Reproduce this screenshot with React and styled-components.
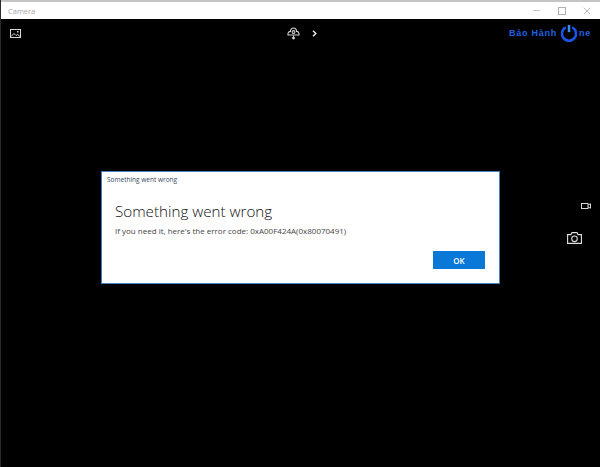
import React from "react";
import styled, { createGlobalStyle } from "styled-components";

const GlobalStyle = createGlobalStyle`
  html, body {
    margin: 0;
    padding: 0;
    background: #000;
  }
  body {
    font-family: "Open Sans", "Liberation Sans", sans-serif;
  }
`;

const Window = styled.div`
  width: 600px;
  height: 467px;
  display: flex;
  flex-direction: column;
  overflow: hidden;
  background: #000;
  border-left: 1px solid #2b2b2b;
  box-sizing: border-box;
`;

const TitleBar = styled.div`
  height: 19px;
  flex: none;
  box-sizing: border-box;
  border-top: 2px solid #c4c4c4;
  background: #fff;
  display: flex;
  align-items: center;
  justify-content: space-between;
  padding-left: 7px;
`;

const AppName = styled.span`
  font-size: 7.5px;
  color: #a6a6a6;
`;

const WindowControls = styled.div`
  display: flex;
  align-items: center;
  gap: 17px;
  padding-right: 9px;
`;

const TopBar = styled.div`
  height: 28px;
  flex: none;
  display: grid;
  grid-template-columns: 1fr auto 1fr;
  align-items: center;
  padding-left: 9px;
`;

const CenterTools = styled.div`
  display: flex;
  align-items: center;
  gap: 12px;
  margin-right: 6px;
`;

const Logo = styled.div`
  justify-self: end;
  display: flex;
  align-items: center;
  font-family: "Liberation Sans", sans-serif;
  font-weight: 700;
  font-size: 9px;
  letter-spacing: 0.75px;
  color: #1f62e4;
  padding-right: 9px;
`;

const Stage = styled.div`
  flex: 1;
  display: grid;
  grid-template-columns: 100px 399px 1fr;
  align-items: start;
`;

const Dialog = styled.div`
  grid-column: 2;
  margin-top: 124px;
  height: 113px;
  box-sizing: border-box;
  background: #fff;
  border: 1px solid #3f83c4;
  display: flex;
  flex-direction: column;
  padding: 3px 14px 14px 13px;
`;

const DialogCaption = styled.div`
  font-size: 6.5px;
  line-height: 10px;
  color: #33475a;
  margin-left: -8px;
`;

const DialogTitle = styled.h1`
  margin: 16px 0 0;
  font-family: "Open Sans", sans-serif;
  font-weight: 300;
  font-size: 15.2px;
  line-height: 20px;
  color: #111;
`;

const DialogText = styled.p`
  margin: 4px 0 0;
  font-size: 8px;
  line-height: 12px;
  color: #444;
`;

const DialogActions = styled.div`
  margin-top: auto;
  display: flex;
  justify-content: flex-end;
`;

const OkButton = styled.button`
  width: 52px;
  height: 18px;
  border: 0;
  padding: 0;
  background: #0a78d7;
  color: #fff;
  font-family: "Open Sans", sans-serif;
  font-size: 8px;
  font-weight: 600;
`;

const SideRail = styled.div`
  grid-column: 3;
  margin-top: 156px;
  display: flex;
  flex-direction: column;
  align-items: flex-end;
  gap: 23px;
  padding-right: 9px;
`;

const CameraSlot = styled.div`
  display: flex;
  margin-right: 9px;
`;

const PhotoIcon = () => (
  <svg width="11" height="9" viewBox="0 0 11 9" fill="none" stroke="#d8d8d8" strokeWidth="1">
    <rect x="0.5" y="0.5" width="10" height="8" />
    <path d="M1 7.5 L4 4.5 L6 6.5 L7.5 5.5 L10 7.5" />
    <rect x="7" y="2" width="1.5" height="1.5" fill="#d8d8d8" stroke="none" />
  </svg>
);

const PeopleIcon = () => (
  <svg width="13" height="13" viewBox="0 0 13 13" fill="none" stroke="#d4d4d4" strokeWidth="1.1">
    <path d="M1 8 C0.5 5.5 2 4.5 3.4 4.4 C3.6 2 5 1 6.5 1 C8 1 9.4 2 9.6 4.4 C11 4.5 12.5 5.5 12 8 Z" />
    <circle cx="6.5" cy="5" r="1.4" />
    <path d="M6.5 8.5 V12 M5 10.5 L6.5 12 L8 10.5" />
  </svg>
);

const ChevronIcon = () => (
  <svg width="5" height="7" viewBox="0 0 5 7" fill="none" stroke="#f0f0f0" strokeWidth="1.4">
    <path d="M1 0.8 L3.8 3.5 L1 6.2" />
  </svg>
);

const MinimizeIcon = () => (
  <svg width="9" height="9" viewBox="0 0 9 9" stroke="#c4c4c4" strokeWidth="1">
    <path d="M1 4.5 H8" />
  </svg>
);

const MaximizeIcon = () => (
  <svg width="8" height="8" viewBox="0 0 8 8" fill="none" stroke="#b0b0b0" strokeWidth="1">
    <rect x="0.5" y="0.5" width="7" height="7" />
  </svg>
);

const CloseIcon = () => (
  <svg width="8" height="8" viewBox="0 0 8 8" stroke="#bcbcbc" strokeWidth="1">
    <path d="M0.8 0.8 L7.2 7.2 M7.2 0.8 L0.8 7.2" />
  </svg>
);

const PowerMark = styled.svg`
  margin: 0 1px 0 3px;
`;

const PowerIcon = () => (
  <PowerMark width="18" height="18" viewBox="0 0 20 20" fill="none" stroke="#1a55e6" strokeWidth="2.8">
    <path d="M6.5 3.8 A7.8 7.8 0 1 0 13.5 3.8" />
    <path d="M10 1 V9" stroke="#3f8af0" />
  </PowerMark>
);

const VideoIcon = () => (
  <svg width="10" height="6" viewBox="0 0 10 6" fill="none" stroke="#d8d8d8" strokeWidth="1">
    <rect x="0.5" y="0.5" width="6.5" height="5" />
    <path d="M7 2 L9.5 0.8 V5.2 L7 4" />
  </svg>
);

const CameraIcon = () => (
  <svg width="15" height="12" viewBox="0 0 15 12" fill="none" stroke="#e0e0e0" strokeWidth="1.1">
    <path d="M0.6 2.6 H4 L5 0.6 H10 L11 2.6 H14.4 V11.4 H0.6 Z" />
    <circle cx="7.5" cy="6.8" r="2.8" />
  </svg>
);

const App = () => (
  <>
    <GlobalStyle />
    <Window>
      <TitleBar>
        <AppName>Camera</AppName>
        <WindowControls>
          <MinimizeIcon />
          <MaximizeIcon />
          <CloseIcon />
        </WindowControls>
      </TitleBar>
      <TopBar>
        <PhotoIcon />
        <CenterTools>
          <PeopleIcon />
          <ChevronIcon />
        </CenterTools>
        <Logo>
          Bảo Hành
          <PowerIcon />
          ne
        </Logo>
      </TopBar>
      <Stage>
        <Dialog>
          <DialogCaption>Something went wrong</DialogCaption>
          <DialogTitle>Something went wrong</DialogTitle>
          <DialogText>If you need it, here's the error code: 0xA00F424A(0x80070491)</DialogText>
          <DialogActions>
            <OkButton>OK</OkButton>
          </DialogActions>
        </Dialog>
        <SideRail>
          <VideoIcon />
          <CameraSlot>
            <CameraIcon />
          </CameraSlot>
        </SideRail>
      </Stage>
    </Window>
  </>
);

export default App;
